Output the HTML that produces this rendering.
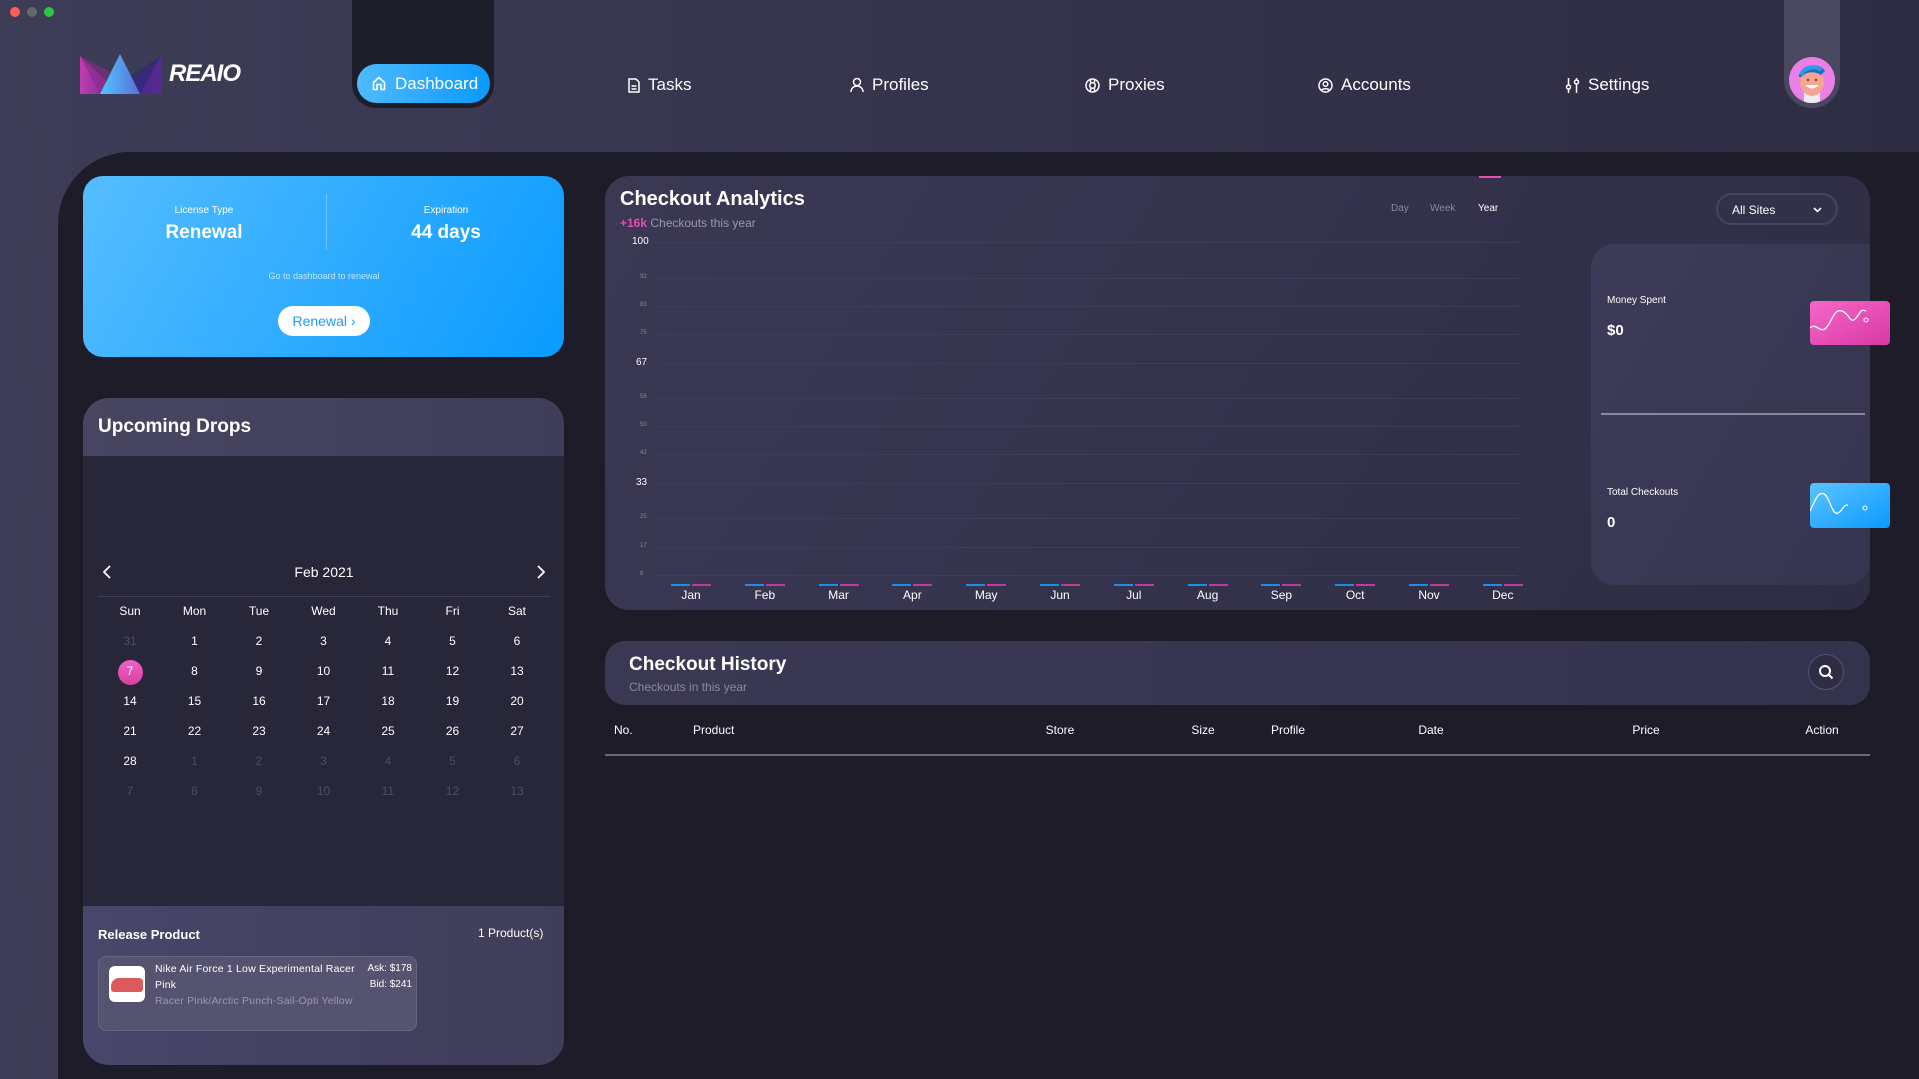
<!DOCTYPE html>
<html><head><meta charset="utf-8"><style>
*{margin:0;padding:0;box-sizing:border-box}
body{width:1919px;height:1079px;overflow:hidden;background:linear-gradient(90deg,#3e3d57,#33324a 60%,#2e2d44);font-family:"Liberation Sans",sans-serif;color:#fff;position:relative}
.a{position:absolute}
.c{transform:translateX(-50%);white-space:nowrap}
.b{font-weight:bold}
.nav{top:75px;font-size:17px;display:flex;align-items:center;gap:8px}
</style></head><body>
<div class="a" style="left:10px;top:7px;width:10px;height:10px;border-radius:50%;background:#fe5f57"></div>
<div class="a" style="left:27px;top:7px;width:10px;height:10px;border-radius:50%;background:#666"></div>
<div class="a" style="left:44px;top:7px;width:10px;height:10px;border-radius:50%;background:#28c840"></div>

<svg class="a" style="left:80px;top:54px" width="81" height="42" viewBox="0 0 81 42">
<defs><linearGradient id="lg1" x1="0" x2="1"><stop offset="0" stop-color="#c13cb0"/><stop offset="1" stop-color="#5a2a8a"/></linearGradient>
<linearGradient id="lg2" x1="0" x2="1"><stop offset="0" stop-color="#4fc7ff"/><stop offset="1" stop-color="#5b6fd8"/></linearGradient>
<linearGradient id="lg3" x1="0" x2="1"><stop offset="0" stop-color="#3a2a8a"/><stop offset="1" stop-color="#5a2a90"/></linearGradient></defs>
<polygon points="0,2 40,40 0,40" fill="url(#lg1)"/><polygon points="0,2 30,18 20,40" fill="#8a2a8a" opacity=".6"/>
<polygon points="81,2 81,40 40,40" fill="url(#lg3)"/><polygon points="81,2 50,22 60,40" fill="#2a2a70" opacity=".6"/>
<polygon points="40,0 60,40 20,40" fill="url(#lg2)"/></svg>
<div class="a b" style="left:169px;top:60px;font-size:24px;font-style:italic;letter-spacing:-1px">REAIO</div>

<div class="a" style="left:352px;top:0;width:142px;height:108px;background:#1e1d2a;border-radius:0 0 24px 24px"></div>
<div class="a" style="left:357px;top:64px;width:133px;height:39px;border-radius:20px;background:linear-gradient(90deg,#4fbaff,#0a9aff);display:flex;align-items:center;padding-left:15px;gap:9px;font-size:17px">
<svg width="14" height="15" viewBox="0 0 14 15" fill="none" stroke="#fff" stroke-width="1.6"><path d="M1.5 6.5L7 1.5l5.5 5v7h-3.5v-5h-4v5H1.5z"/></svg>Dashboard</div>

<div class="a nav" style="left:628px"><svg width="12" height="15" viewBox="0 0 12 15" fill="none" stroke="#fff" stroke-width="1.5"><path d="M1 1h7l3 3v10H1z M3.5 8h5M3.5 11h5"/></svg>Tasks</div>
<div class="a nav" style="left:850px"><svg width="14" height="16" viewBox="0 0 14 16" fill="none" stroke="#fff" stroke-width="1.5"><circle cx="7" cy="5" r="3.5"/><path d="M1 15c0-4 3-6 6-6s6 2 6 6"/></svg>Profiles</div>
<div class="a nav" style="left:1085px"><svg width="15" height="15" viewBox="0 0 15 15" fill="none" stroke="#fff" stroke-width="1.5"><circle cx="7.5" cy="7.5" r="6.5"/><circle cx="7.5" cy="7.5" r="2.8"/><path d="M5.5 1.5v3M9.5 1.5v3M5.5 10.5v3M9.5 10.5v3"/></svg>Proxies</div>
<div class="a nav" style="left:1318px"><svg width="15" height="15" viewBox="0 0 15 15" fill="none" stroke="#fff" stroke-width="1.5"><circle cx="7.5" cy="7.5" r="6.5"/><circle cx="7.5" cy="6" r="2.3"/><path d="M3.5 12.5c1-2.3 7-2.3 8 0"/></svg>Accounts</div>
<div class="a nav" style="left:1565px"><svg width="15" height="16" viewBox="0 0 15 16" fill="none" stroke="#fff" stroke-width="1.5"><path d="M3.5 1v15M11.5 1v15"/><circle cx="3.5" cy="10" r="2" fill="#33324a"/><circle cx="11.5" cy="5" r="2" fill="#33324a"/></svg>Settings</div>

<div class="a" style="left:1784px;top:0;width:56px;height:108px;background:#4a4860;border-radius:0 0 28px 28px"></div>
<svg class="a" style="left:1789px;top:57px" width="46" height="46" viewBox="0 0 46 46"><defs><clipPath id="cc"><circle cx="23" cy="23" r="23"/></clipPath></defs><g clip-path="url(#cc)"><rect width="46" height="46" fill="#ea7fe6"/><rect x="15" y="36" width="16" height="12" fill="#eee"/><ellipse cx="23" cy="25" rx="12" ry="14" fill="#f4a58f"/><path d="M10 20c0-12 20-16 26-6l-4 4c-6-4-14-4-20 2z" fill="#1c6fc0"/><path d="M12 18c3-8 14-10 20-5" stroke="#2c9be8" stroke-width="4" fill="none"/><path d="M16 28q7 7 14 0z" fill="#fff"/><circle cx="19" cy="23" r="1.2" fill="#8a3a2a"/><circle cx="27" cy="23" r="1.2" fill="#8a3a2a"/></g></svg>

<div class="a" style="left:58px;top:152px;width:1861px;height:927px;background:#1d1c28;border-radius:72px 0 0 0"></div>

<!-- License card -->
<div class="a" style="left:83px;top:176px;width:481px;height:181px;border-radius:20px;background:linear-gradient(120deg,#55bdff,#0a9bff)"></div>
<div class="a" style="left:326px;top:194px;width:1px;height:56px;background:rgba(255,255,255,.3)"></div>
<div class="a c" style="left:204px;top:205px;font-size:10px">License Type</div>
<div class="a c b" style="left:204px;top:222px;font-size:19px">Renewal</div>
<div class="a c" style="left:446px;top:205px;font-size:10px">Expiration</div>
<div class="a c b" style="left:446px;top:222px;font-size:19px">44 days</div>
<div class="a c" style="left:324px;top:271px;font-size:9px;color:rgba(255,255,255,.7)">Go to dashboard to renewal</div>
<div class="a" style="left:278px;top:306px;width:92px;height:30px;border-radius:15px;background:#fff;color:#1a9cff;font-size:14px;display:flex;align-items:center;justify-content:center">Renewal ›</div>

<!-- Upcoming drops -->
<div class="a" style="left:83px;top:398px;width:481px;height:667px;border-radius:26px;background:#282739;overflow:hidden">
<div style="height:58px;background:linear-gradient(90deg,#47455f,#3f3d58)"></div>
<div class="a" style="left:0;top:508px;width:481px;height:159px;background:linear-gradient(90deg,#48466a,#3f3d58)"></div>
</div>
<div class="a b" style="left:98px;top:416px;font-size:19px">Upcoming Drops</div>
<svg class="a" style="left:102px;top:564px" width="10" height="16" viewBox="0 0 10 16" fill="none" stroke="#fff" stroke-width="1.8"><path d="M8 2L2 8l6 6"/></svg>
<svg class="a" style="left:536px;top:564px" width="10" height="16" viewBox="0 0 10 16" fill="none" stroke="#fff" stroke-width="1.8"><path d="M2 2l6 6-6 6"/></svg>
<div class="a c" style="left:324px;top:564px;font-size:14px">Feb 2021</div>
<div class="a" style="left:98px;top:596px;width:452px;height:1px;background:#3f3e55"></div>
<div id="cal"></div>

<div class="a b" style="left:98px;top:927px;font-size:13px">Release Product</div>
<div class="a" style="left:478px;top:926px;font-size:12px">1 Product(s)</div>
<div class="a" style="left:98px;top:956px;width:319px;height:75px;border-radius:8px;background:#55536f;border:1px solid #66647e"></div>
<div class="a" style="left:109px;top:966px;width:36px;height:36px;border-radius:6px;background:#fff;overflow:hidden"><div style="margin:12px 0 0 2px;width:32px;height:14px;background:#dd5a5a;border-radius:8px 4px 3px 3px"></div></div>
<div class="a" style="left:155px;top:961px;font-size:10.5px;line-height:16px;width:200px;letter-spacing:.2px">Nike Air Force 1 Low Experimental Racer Pink<br><span style="color:#9b99ae">Racer Pink/Arctic Punch-Sail-Opti Yellow</span></div>
<div class="a" style="left:355px;top:961px;font-size:10px;line-height:16px;text-align:right;width:57px">Ask: $178<br>Bid: $241</div>

<!-- Analytics -->
<div class="a" style="left:605px;top:176px;width:1265px;height:434px;border-radius:24px;background:linear-gradient(120deg,#3a3853,#2e2d44)"></div>
<div class="a b" style="left:620px;top:188px;font-size:20px">Checkout Analytics</div>
<div class="a" style="left:620px;top:216px;font-size:12px;color:#9a98ae"><span style="color:#e04fb4" class="b">+16k</span> Checkouts this year</div>
<div class="a" style="left:1479px;top:176px;width:22px;height:2px;background:#e04fb4"></div>
<div class="a" style="left:1391px;top:203px;font-size:10px;color:#8a889e">Day</div>
<div class="a" style="left:1430px;top:203px;font-size:10px;color:#8a889e">Week</div>
<div class="a" style="left:1478px;top:203px;font-size:10px">Year</div>
<div class="a" style="left:1716px;top:193px;width:122px;height:32px;border-radius:16px;border:2px solid #454460;background:#32314a;font-size:12px;padding:8px 0 0 14px">All Sites<svg style="position:absolute;right:14px;top:12px" width="9" height="6" viewBox="0 0 9 6" fill="none" stroke="#fff" stroke-width="1.6"><path d="M1 1l3.5 3.5L8 1"/></svg></div>
<div id="chart"></div>

<div class="a" style="left:1591px;top:244px;width:279px;height:341px;border-radius:24px 0 24px 24px;background:linear-gradient(120deg,#3d3b58,#36354f)"></div>
<div class="a" style="left:1607px;top:295px;font-size:10px">Money Spent</div>
<div class="a b" style="left:1607px;top:322px;font-size:15px">$0</div>
<svg class="a" style="left:1810px;top:301px" width="80" height="44" viewBox="0 0 80 44"><defs><linearGradient id="pk" x1="0" y1="0" x2="1" y2="1"><stop offset="0" stop-color="#f766c8"/><stop offset="1" stop-color="#d83aa4"/></linearGradient></defs><rect width="80" height="44" rx="4" fill="url(#pk)"/><path d="M0 27c6-6 10 6 16 0s8-20 16-17 8 14 14 7 4-9 10-7" stroke="#fff" stroke-width="1.3" fill="none"/><circle cx="56" cy="19" r="2" stroke="#fff" fill="none"/></svg>
<div class="a" style="left:1601px;top:413px;width:264px;height:2px;background:#8a889c"></div>
<div class="a" style="left:1607px;top:487px;font-size:10px">Total Checkouts</div>
<div class="a b" style="left:1607px;top:514px;font-size:15px">0</div>
<svg class="a" style="left:1810px;top:483px" width="80" height="45" viewBox="0 0 80 45"><defs><linearGradient id="bl" x1="0" y1="0" x2="1" y2="1"><stop offset="0" stop-color="#5cc3ff"/><stop offset="1" stop-color="#0a9aff"/></linearGradient></defs><rect width="80" height="45" rx="4" fill="url(#bl)"/><path d="M0 28c5-10 8-20 14-17s8 22 14 19 4-8 10-8" stroke="#fff" stroke-width="1.3" fill="none"/><circle cx="55" cy="25" r="2" stroke="#fff" fill="none"/></svg>

<!-- History -->
<div class="a" style="left:605px;top:641px;width:1265px;height:64px;border-radius:20px;background:linear-gradient(90deg,#3a3853,#34334d)"></div>
<div class="a b" style="left:629px;top:654px;font-size:19px">Checkout History</div>
<div class="a" style="left:629px;top:680px;font-size:12px;color:#8a889e">Checkouts in this year</div>
<div class="a" style="left:1808px;top:654px;width:36px;height:36px;border-radius:50%;border:1px solid #55536e;background:#2e2d44"></div>
<svg class="a" style="left:1818px;top:664px" width="16" height="16" viewBox="0 0 16 16" fill="none" stroke="#fff" stroke-width="2"><circle cx="7" cy="7" r="5"/><path d="M11 11l3.5 3.5"/></svg>
<div class="a" style="left:614px;top:723px;font-size:12px">No.</div>
<div class="a" style="left:693px;top:723px;font-size:12px">Product</div>
<div class="a c" style="left:1060px;top:723px;font-size:12px">Store</div>
<div class="a c" style="left:1203px;top:723px;font-size:12px">Size</div>
<div class="a c" style="left:1288px;top:723px;font-size:12px">Profile</div>
<div class="a c" style="left:1431px;top:723px;font-size:12px">Date</div>
<div class="a c" style="left:1646px;top:723px;font-size:12px">Price</div>
<div class="a c" style="left:1822px;top:723px;font-size:12px">Action</div>
<div class="a" style="left:605px;top:754px;width:1265px;height:2px;background:#6a6880"></div>

<script>
(function(){
var h='';
var days=['Sun','Mon','Tue','Wed','Thu','Fri','Sat'];
for(var i=0;i<7;i++){h+='<div class="a c" style="left:'+(130+i*64.5)+'px;top:604px;font-size:12px">'+days[i]+'</div>';}
var nums=[31];for(var d=1;d<=28;d++)nums.push(d);for(d=1;d<=13;d++)nums.push(d);
var ys=[634,664,694,724,754,784];
for(var k=0;k<42;k++){var r=Math.floor(k/7),c=k%7;var dim=(k==0||k>28);var x=130+c*64.5;
if(nums[k]==7&&k==7){h+='<div class="a" style="left:'+(x-12.5)+'px;top:'+(ys[r]-4)+'px;width:25px;height:25px;border-radius:50%;background:linear-gradient(#f35fc7,#d9409f)"></div>';}
h+='<div class="a c" style="left:'+x+'px;top:'+ys[r]+'px;font-size:12px;color:'+(dim?'#4e4d63':'#fff')+'">'+nums[k]+'</div>';}
document.getElementById('cal').outerHTML=h;
var g='';var labs=['100','92','83','75','67','58','50','42','33','25','17','8'];var ly=[242,278,306,334,363,398,426,454,483,518,547,575];
for(i=0;i<12;i++){var big=(i==0||i==4||i==8);g+='<div class="a" style="left:'+(i==0?632:(big?636:640))+'px;top:'+(ly[i]-(big?6:4))+'px;font-size:'+(big?10:6)+'px;color:'+(big?'#fff':'#8a889e')+'">'+labs[i]+'</div>';
g+='<div class="a" style="left:655px;top:'+ly[i]+'px;width:863px;height:1px;background:#3e3d57"></div>';}
var m=['Jan','Feb','Mar','Apr','May','Jun','Jul','Aug','Sep','Oct','Nov','Dec'];
for(i=0;i<12;i++){var x=691+i*73.8;g+='<div class="a" style="left:'+(x-20)+'px;top:584px;width:19px;height:2px;background:#1a8ee8"></div><div class="a" style="left:'+(x+1)+'px;top:584px;width:19px;height:2px;background:#c03a9a"></div>';
g+='<div class="a c" style="left:'+x+'px;top:588px;font-size:12px">'+m[i]+'</div>';}
document.getElementById('chart').outerHTML=g;
})();
</script>
</body></html>
